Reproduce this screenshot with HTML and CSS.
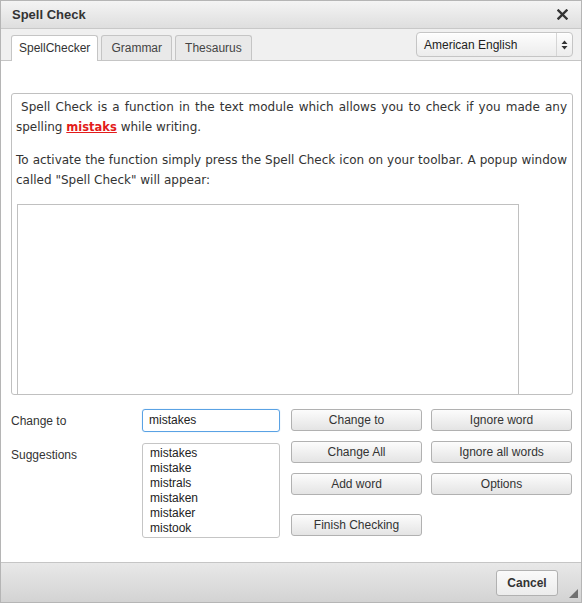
FILE: index.html
```
<!DOCTYPE html>
<html>
<head>
<meta charset="utf-8">
<link rel="stylesheet" href="styles.css">
</head>
<body>
<div class="dialog">
  <div class="titlebar">
    <span class="title">Spell Check</span>
    <span class="close">
      <svg width="11" height="11" viewBox="0 0 11 11"><path d="M1.5 1.5 L9.5 9.5 M9.5 1.5 L1.5 9.5" stroke="#333" stroke-width="2.4" stroke-linecap="square"/></svg>
    </span>
  </div>
  <div class="tabbar">
    <div class="tabs">
      <div class="tab active">SpellChecker</div>
      <div class="tab">Grammar</div>
      <div class="tab">Thesaurus</div>
    </div>
    <div class="select">
      <span class="select-text">American English</span>
      <span class="select-arrows">
        <svg width="7" height="10" viewBox="0 0 7 10"><path d="M3.5 0.5 L6.5 4 L0.5 4 Z M3.5 9.5 L6.5 6 L0.5 6 Z" fill="#333"/></svg>
      </span>
    </div>
  </div>
  <div class="panel">
    <div class="content">
      <p>&nbsp;Spell Check is a function in the text module which allows you to check if you made any spelling <span class="err">mistaks</span> while writing.</p>
      <p>To activate the function simply press the Spell Check icon on your toolbar. A popup window called "Spell Check" will appear:</p>
      <div class="shot"></div>
    </div>
    <div class="form">
      <div class="fields">
        <div class="label">Change to</div>
        <div class="input">mistakes</div>
        <div class="label label2">Suggestions</div>
        <div class="list">
          <div>mistakes</div>
          <div>mistake</div>
          <div>mistrals</div>
          <div>mistaken</div>
          <div>mistaker</div>
          <div>mistook</div>
        </div>
      </div>
      <div class="buttons">
        <div class="btn">Change to</div>
        <div class="btn">Ignore word</div>
        <div class="btn">Change All</div>
        <div class="btn">Ignore all words</div>
        <div class="btn">Add word</div>
        <div class="btn">Options</div>
        <div class="btn finish">Finish Checking</div>
      </div>
    </div>
  </div>
  <div class="footer">
    <div class="cancel">Cancel</div>
    <span class="grip"></span>
  </div>
</div>
</body>
</html>
```
FILE: styles.css
```
html, body {
  margin: 0;
  padding: 0;
  background: #fff;
}
body {
  font-family: "Liberation Sans", Arial, sans-serif;
  font-size: 12px;
  color: #333;
}
.dialog {
  width: 580px;
  height: 601px;
  border: 1px solid #b5b5b5;
  display: flex;
  flex-direction: column;
  position: relative;
  overflow: hidden;
}
.titlebar {
  height: 28px;
  flex: none;
  background: linear-gradient(#f4f4f4, #dedede);
  border-bottom: 1px solid #c8c8c8;
  display: flex;
  align-items: center;
  justify-content: space-between;
  padding: 0 12px 0 11px;
  box-sizing: border-box;
}
.title {
  font-weight: bold;
  font-size: 13px;
  color: #333;
}
.close {
  display: flex;
  margin-right: 1px;
}
.tabbar {
  height: 31px;
  flex: none;
  background: #f0f0f0;
  border-bottom: 1px solid #c5c5c5;
  display: flex;
  justify-content: space-between;
  align-items: flex-end;
  padding: 0 8px 0 10px;
}
.tabs {
  display: flex;
  gap: 3px;
  margin-bottom: -1px;
}
.tab {
  height: 24px;
  line-height: 24px;
  padding: 0 9px;
  border: 1px solid #c5c5c5;
  border-bottom: none;
  border-radius: 3px 3px 0 0;
  background: #e9e9e9;
  color: #444;
}
.tab.active {
  background: #fff;
  height: 25px;
  padding: 0 7px;
  color: #333;
}
.select {
  align-self: flex-start;
  margin-top: 3px;
  width: 155px;
  height: 23px;
  border: 1px solid #c5c5c5;
  border-radius: 4px;
  background: linear-gradient(#fdfdfd, #ececec);
  display: flex;
  align-items: center;
  justify-content: space-between;
  box-shadow: inset 0 1px 0 #fff;
}
.select-text {
  padding-left: 7px;
  font-size: 12px;
  color: #222;
}
.select-arrows {
  width: 15px;
  height: 23px;
  border-left: 1px solid #d5d5d5;
  display: flex;
  align-items: center;
  justify-content: center;
}
.panel {
  flex: 1;
  background: #fff;
  padding: 32px 8px 0 10px;
}
.content {
  height: 297px;
  border: 1px solid #c0c0c0;
  border-radius: 3px;
  padding: 3px 5px 0 4px;
  overflow: hidden;
  font-family: "DejaVu Sans", Verdana, sans-serif;
  font-size: 12px;
  line-height: 20px;
  color: #333;
}
.content p {
  margin: 0 0 13px 0;
  text-align: justify;
}
.err {
  color: #e31b1b;
  font-weight: bold;
  font-size: 11.5px;
  text-decoration: underline;
  text-decoration-color: #e31b1b;
}
.shot {
  width: 500px;
  height: 300px;
  border: 1px solid #c0c0c0;
  margin-left: 1px;
  margin-top: 14px;
}
.form {
  display: flex;
  margin-top: 14px;
  gap: 11px;
}
.fields {
  display: grid;
  grid-template-columns: 131px 138px;
  row-gap: 11px;
  align-content: start;
}
.label {
  padding-top: 5px;
  font-size: 12px;
  color: #333;
}
.label2 {
  padding-top: 5px;
}
.input {
  height: 21px;
  line-height: 21px;
  border: 1px solid #5aa2e4;
  border-radius: 3px;
  padding: 0 6px;
  box-shadow: 0 0 1px #9cc8f0;
  color: #222;
}
.list {
  height: 91px;
  border: 1px solid #c5c5c5;
  border-radius: 3px;
  padding: 2px 0 0 7px;
  line-height: 15px;
  color: #222;
}
.buttons {
  display: grid;
  grid-template-columns: 131px 141px;
  grid-template-rows: 22px 22px 22px 31px;
  column-gap: 9px;
  row-gap: 10px;
  align-content: start;
}
.btn {
  height: 20px;
  border: 1px solid #b1b1b1;
  border-radius: 3px;
  background: linear-gradient(#fcfcfc, #e4e4e4);
  display: flex;
  align-items: center;
  justify-content: center;
  color: #333;
  font-size: 12px;
}
.finish {
  grid-column: 1;
  align-self: end;
}
.footer {
  height: 39px;
  flex: none;
  border-top: 1px solid #c5c5c5;
  background: linear-gradient(#e8e8e8, #d3d3d3);
  display: flex;
  justify-content: flex-end;
  align-items: center;
  padding-right: 23px;
}
.cancel {
  width: 60px;
  height: 24px;
  border: 1px solid #b1b1b1;
  border-radius: 3px;
  background: linear-gradient(#fafafa, #ececec);
  display: flex;
  align-items: center;
  justify-content: center;
  font-weight: bold;
  font-size: 12px;
  color: #333;
}
.grip {
  position: absolute;
  right: 3px;
  bottom: 4px;
  width: 0;
  height: 0;
  border-left: 9px solid transparent;
  border-bottom: 9px solid #707070;
}
```
